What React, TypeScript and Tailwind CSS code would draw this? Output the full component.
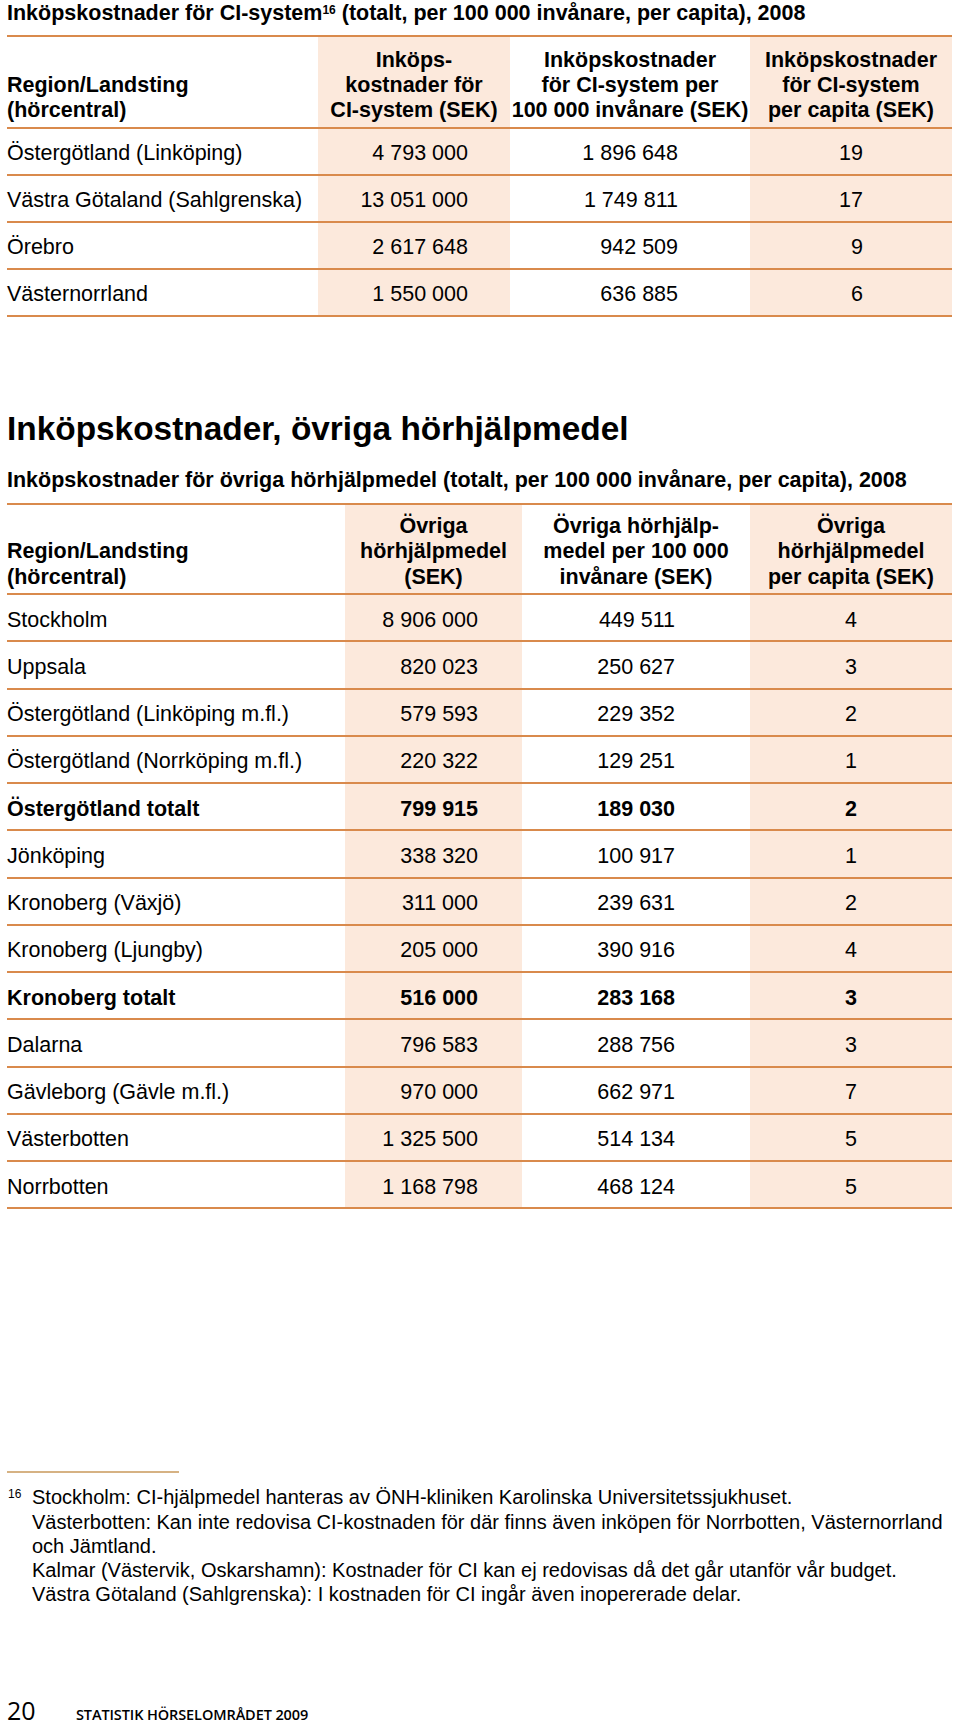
import React from "react";

const LINE = "border-[#d98a4c]";
const SHADE = "bg-[#fce9dc]";

type Row = { name: string; a: string; b: string; c: string; bold?: boolean };

const t1Rows: Row[] = [
  { name: "Östergötland (Linköping)", a: "4 793 000", b: "1 896 648", c: "19" },
  { name: "Västra Götaland (Sahlgrenska)", a: "13 051 000", b: "1 749 811", c: "17" },
  { name: "Örebro", a: "2 617 648", b: "942 509", c: "9" },
  { name: "Västernorrland", a: "1 550 000", b: "636 885", c: "6" },
];

const t2Rows: Row[] = [
  { name: "Stockholm", a: "8 906 000", b: "449 511", c: "4" },
  { name: "Uppsala", a: "820 023", b: "250 627", c: "3" },
  { name: "Östergötland (Linköping m.fl.)", a: "579 593", b: "229 352", c: "2" },
  { name: "Östergötland (Norrköping m.fl.)", a: "220 322", b: "129 251", c: "1" },
  { name: "Östergötland totalt", a: "799 915", b: "189 030", c: "2", bold: true },
  { name: "Jönköping", a: "338 320", b: "100 917", c: "1" },
  { name: "Kronoberg (Växjö)", a: "311 000", b: "239 631", c: "2" },
  { name: "Kronoberg (Ljungby)", a: "205 000", b: "390 916", c: "4" },
  { name: "Kronoberg totalt", a: "516 000", b: "283 168", c: "3", bold: true },
  { name: "Dalarna", a: "796 583", b: "288 756", c: "3" },
  { name: "Gävleborg (Gävle m.fl.)", a: "970 000", b: "662 971", c: "7" },
  { name: "Västerbotten", a: "1 325 500", b: "514 134", c: "5" },
  { name: "Norrbotten", a: "1 168 798", b: "468 124", c: "5" },
];

function Lines({ lines }: { lines: string[] }) {
  return (
    <>
      {lines.map((l, i) => (
        <div key={i} className="whitespace-nowrap">
          {l}
        </div>
      ))}
    </>
  );
}

function Table1() {
  return (
    <div className={`mt-[9px] border-t-2 ${LINE} w-[945px]`}>
      <div
        className={`grid grid-cols-[311px_192px_240px_202px] h-[92px] border-b-2 ${LINE} font-bold leading-[25px]`}
      >
        <div className="flex flex-col justify-end pb-[4px]">
          <Lines lines={["Region/Landsting", "(hörcentral)"]} />
        </div>
        <div className={`${SHADE} flex flex-col justify-end items-center text-center pb-[4px]`}>
          <Lines lines={["Inköps-", "kostnader för", "CI-system (SEK)"]} />
        </div>
        <div className="flex flex-col justify-end items-center text-center pb-[4px]">
          <Lines lines={["Inköpskostnader", "för CI-system per", "100 000 invånare (SEK)"]} />
        </div>
        <div className={`${SHADE} flex flex-col justify-end items-center text-center pb-[4px]`}>
          <Lines lines={["Inköpskostnader", "för CI-system", "per capita (SEK)"]} />
        </div>
      </div>
      {t1Rows.map((r) => (
        <div
          key={r.name}
          className={`grid grid-cols-[311px_192px_240px_202px] h-[47px] border-b-2 ${LINE} ${r.bold ? "font-bold" : ""}`}
        >
          <div className="flex items-center whitespace-nowrap pt-[3px]">{r.name}</div>
          <div className={`${SHADE} flex items-center justify-end pr-[42px] pt-[3px]`}>{r.a}</div>
          <div className="flex items-center justify-end pr-[72px] pt-[3px]">{r.b}</div>
          <div className={`${SHADE} flex items-center justify-end pr-[89px] pt-[3px]`}>{r.c}</div>
        </div>
      ))}
    </div>
  );
}

function Table2() {
  return (
    <div className={`mt-[10px] border-t-2 ${LINE} w-[945px]`}>
      <div
        className={`grid grid-cols-[338px_177px_228px_202px] h-[90px] border-b-2 ${LINE} font-bold leading-[25.5px]`}
      >
        <div className="flex flex-col justify-end pb-[3px]">
          <Lines lines={["Region/Landsting", "(hörcentral)"]} />
        </div>
        <div className={`${SHADE} flex flex-col justify-end items-center text-center pb-[3px]`}>
          <Lines lines={["Övriga", "hörhjälpmedel", "(SEK)"]} />
        </div>
        <div className="flex flex-col justify-end items-center text-center pb-[3px]">
          <Lines lines={["Övriga hörhjälp-", "medel per 100 000", "invånare (SEK)"]} />
        </div>
        <div className={`${SHADE} flex flex-col justify-end items-center text-center pb-[3px]`}>
          <Lines lines={["Övriga", "hörhjälpmedel", "per capita (SEK)"]} />
        </div>
      </div>
      {t2Rows.map((r) => (
        <div
          key={r.name}
          className={`grid grid-cols-[338px_177px_228px_202px] h-[47.25px] border-b-2 ${LINE} ${r.bold ? "font-bold" : ""}`}
        >
          <div className="flex items-center whitespace-nowrap pt-[5px]">{r.name}</div>
          <div className={`${SHADE} flex items-center justify-end pr-[44px] pt-[5px]`}>{r.a}</div>
          <div className="flex items-center justify-end pr-[75px] pt-[5px]">{r.b}</div>
          <div className={`${SHADE} flex items-center justify-center pt-[5px]`}>{r.c}</div>
        </div>
      ))}
    </div>
  );
}

export default function App() {
  return (
    <div className="w-[960px] h-[1726px] overflow-hidden bg-white text-black font-['Liberation_Sans',Arial,sans-serif] text-[21.5px] leading-[25px] flex flex-col">
      <div className="pl-[7px] pt-[1px]">
        <div className="font-bold whitespace-nowrap">
          Inköpskostnader för CI-system
          <sup className="text-[12px] font-bold">16</sup> (totalt, per 100 000 invånare, per capita), 2008
        </div>
        <Table1 />

        <h2 className="mt-[92px] text-[33.4px] leading-[40px] font-bold whitespace-nowrap">
          Inköpskostnader, övriga hörhjälpmedel
        </h2>
        <div className="mt-[19px] font-bold whitespace-nowrap">
          Inköpskostnader för övriga hörhjälpmedel (totalt, per 100 000 invånare, per capita), 2008
        </div>
        <Table2 />

        <div className="mt-[262px] w-[172px] h-[2px] bg-[#d6b283]" />
        <div className="mt-[12px] flex text-[20px] leading-[24.3px]">
          <div className="w-[25px] text-[12px] leading-[16px] pt-[1px] text-left pl-[1px]">16</div>
          <div>
            <div className="whitespace-nowrap">Stockholm: CI-hjälpmedel hanteras av ÖNH-kliniken Karolinska Universitetssjukhuset.</div>
            <div className="whitespace-nowrap">
              Västerbotten: Kan inte redovisa CI-kostnaden för där finns även inköpen för Norrbotten, Västernorrland
            </div>
            <div className="whitespace-nowrap">och Jämtland.</div>
            <div className="whitespace-nowrap">
              Kalmar (Västervik, Oskarshamn): Kostnader för CI kan ej redovisas då det går utanför vår budget.
            </div>
            <div className="whitespace-nowrap">Västra Götaland (Sahlgrenska): I kostnaden för CI ingår även inopererade delar.</div>
          </div>
        </div>
      </div>

      <div className="mt-auto pl-[7px] flex items-baseline font-['Open_Sans',sans-serif] translate-y-[1px]">
        <span className="text-[25px] leading-[30px] w-[69px]">20</span>
        <span className="text-[14.5px] font-semibold tracking-[-0.1px]">STATISTIK HÖRSELOMRÅDET 2009</span>
      </div>
    </div>
  );
}
